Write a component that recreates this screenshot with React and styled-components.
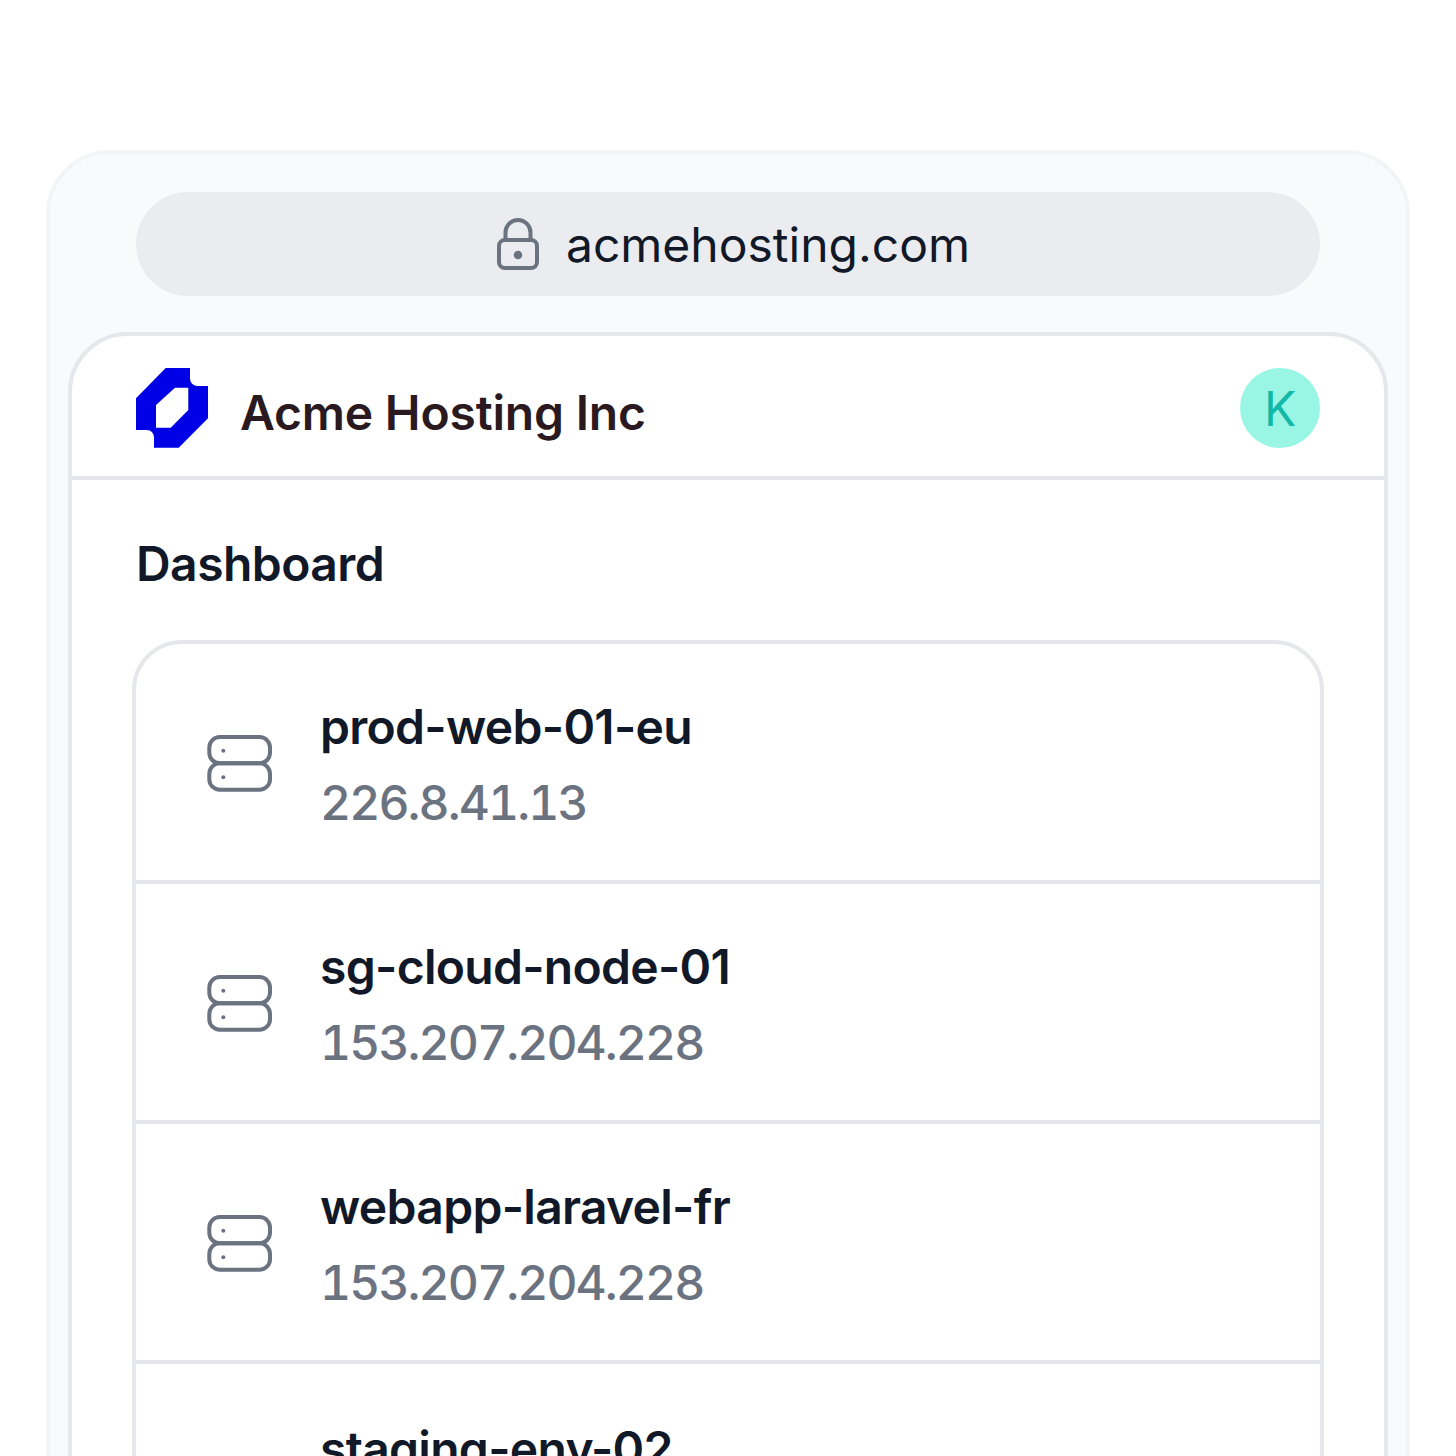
import React from "react";
import styled, { createGlobalStyle } from "styled-components";

const Global = createGlobalStyle`
  html, body { margin: 0; height: 1456px; overflow: hidden; background: #fff; }
  * { box-sizing: border-box; }
  body { font-family: Inter, "Noto Sans", sans-serif; }
`;
const Page = styled.div`
  height: 1456px; overflow: hidden; padding: 150px 46px 0;
`;
const Frame = styled.div`
  width: 1364px; min-height: 1500px; padding: 38px 18px 0;
  background: #f9fafb; border: 4px solid #f3f4f6; border-radius: 64px 64px 0 0;
`;
const UrlBar = styled.div`
  height: 104px; margin: 0 68px; padding-left: 11px; border-radius: 52px; background: #ebecf0;
  display: flex; align-items: center; justify-content: center; gap: 27px;
  color: #111827; font-size: 48px; font-weight: 400;
`;
const Browser = styled.div`
  margin-top: 36px; background: #fff; border: 4px solid #e5e7eb; border-radius: 60px 60px 0 0;
  min-height: 1200px;
`;
const Header = styled.header`
  height: 144px; padding: 32px 64px 0; border-bottom: 4px solid #e5e7eb;
  display: flex; align-items: flex-start; justify-content: space-between;
`;
const Brand = styled.div`
  display: flex; align-items: center; gap: 32px; height: 88px;
  color: #2a1a1f; font-size: 48px; font-weight: 600; letter-spacing: -0.2px;
  svg { align-self: flex-start; }
`;
const Avatar = styled.div`
  width: 80px; height: 80px; border-radius: 50%; background: #99f6e4; color: #14b8a6;
  display: flex; align-items: center; justify-content: center; font-size: 48px; font-weight: 400;
`;
const Main = styled.main`
  padding: 56px 60px 0;
`;
const Title = styled.h1`
  margin: 0 0 48px 4px; color: #111827; font-size: 48px; line-height: 56px; font-weight: 600;
  letter-spacing: -0.55px;
`;
const List = styled.div`
  border: 4px solid #e5e7eb; border-radius: 50px 50px 0 0;
`;
const Row = styled.div`
  height: 240px; padding: 0 64px; display: flex; align-items: center; gap: 40px;
  border-bottom: 4px solid #e5e7eb;
  &:last-child { border-bottom: 0; }
`;
const Info = styled.div`
  display: flex; flex-direction: column; gap: 16px; padding-top: 5px;
`;
const Name = styled.div`
  color: #111827; font-size: 48px; line-height: 60px; font-weight: 600; letter-spacing: -0.7px;
`;
const Address = styled.div`
  color: #6b7280; font-size: 48px; line-height: 60px; font-weight: 500;
  font-variant-numeric: tabular-nums; letter-spacing: -1.9px;
`;

const LockIcon = () => (
  <svg width="42" height="52" viewBox="0 0 42 52" fill="none" stroke="#6b7280" strokeWidth="4">
    <rect x="2" y="22" width="38" height="28" rx="6" />
    <path d="M8.5 22V14.5a12.5 12.5 0 0 1 25 0V22" />
    <circle cx="21" cy="37" r="3" fill="#6b7280" strokeWidth="2.5" />
  </svg>
);
const Logo = () => (
  <svg width="72" height="80" viewBox="0 0 72 80">
    <path
      fill="#0000e6"
      fillRule="evenodd"
      d="M0 30.3 29.7 0H54V10.3C54 14.5 57.2 18 61.3 18H72V50.3L42.7 79.7H18V69.3C18 65.2 14.8 62 10.7 62H0ZM20 37V59.7H34.7L52.3 42V19.7H39Z"
    />
  </svg>
);
const ServerIcon = () => (
  <svg width="80" height="80" viewBox="0 0 80 80" fill="none" stroke="#6b7280" strokeWidth="4">
    <rect x="9.3" y="15" width="60.7" height="26.3" rx="10.5" />
    <rect x="9.3" y="41.3" width="60.7" height="26.4" rx="10.5" />
    <circle cx="23.3" cy="28.7" r="2" fill="#6b7280" stroke="none" />
    <circle cx="23.3" cy="55.3" r="2" fill="#6b7280" stroke="none" />
  </svg>
);

const servers = [
  ["prod-web-01-eu", "226.8.41.13"],
  ["sg-cloud-node-01", "153.207.204.228"],
  ["webapp-laravel-fr", "153.207.204.228"],
  ["staging-env-02", "153.207.204.228"],
];

export default function App() {
  return (
    <Page>
      <Global />
      <Frame>
        <UrlBar><LockIcon />acmehosting.com</UrlBar>
        <Browser>
          <Header>
            <Brand><Logo />Acme Hosting Inc</Brand>
            <Avatar>K</Avatar>
          </Header>
          <Main>
            <Title>Dashboard</Title>
            <List>
              {servers.map(([name, ip]) => (
                <Row key={name}>
                  <ServerIcon />
                  <Info><Name>{name}</Name><Address>{ip}</Address></Info>
                </Row>
              ))}
            </List>
          </Main>
        </Browser>
      </Frame>
    </Page>
  );
}
